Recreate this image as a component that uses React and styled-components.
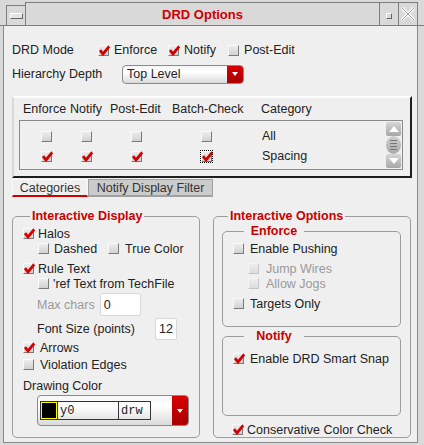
import React from "react";
import styled, { createGlobalStyle } from "styled-components";

const GlobalStyle = createGlobalStyle`
  html, body {
    margin: 0;
    padding: 0;
    background: #d9d9d9;
  }
  body {
    font-family: "Liberation Sans", Arial, sans-serif;
    font-size: 12.5px;
    color: #222;
  }
`;

const Window = styled.div`
  width: 424px;
  height: 445px;
  background: #d9d9d9;
  display: flex;
  flex-direction: column;
  overflow: hidden;
  box-sizing: border-box;
`;

const TitleBar = styled.div`
  height: 26px;
  display: flex;
  box-sizing: border-box;
  border-bottom: 1px solid #7c7c7c;
  padding: 0 6px 0 6px;
`;

const TitleButton = styled.div`
  width: ${(p) => p.$w}px;
  border-left: 1px solid #7c7c7c;
  border-right: ${(p) => (p.$last ? "1px solid #7c7c7c" : "none")};
  border-top: 1px solid #7c7c7c;
  margin-top: ${(p) => (p.$low ? 5 : 2)}px;
  display: flex;
  align-items: center;
  justify-content: center;
  box-sizing: border-box;
`;

const Title = styled.div`
  flex: 1;
  border-left: 1px solid #7c7c7c;
  border-top: 1px solid #7c7c7c;
  margin-top: 2px;
  display: flex;
  align-items: center;
  justify-content: center;
  font-weight: bold;
  font-size: 13px;
  color: #cc0000;
`;

const MinGlyph = styled.div`
  width: 11px;
  height: 4px;
  border: 1px solid #666;
  border-top-color: #fff;
  border-left-color: #fff;
  background: #e4e4e4;
`;

const SquareGlyph = styled.div`
  width: 4px;
  height: 4px;
  border: 1px solid #666;
  border-top-color: #fff;
  border-left-color: #fff;
  margin-top: 4px;
`;

const Content = styled.div`
  flex: 1;
  margin: 0 6px 2px 3px;
  background: #efefef;
  border-left: 1px solid #8a8a8a;
  border-right: 1px solid #8a8a8a;
  border-bottom: 1px solid #8a8a8a;
  padding: 12px 5px 0 8px;
  display: flex;
  flex-direction: column;
`;

const FormRow = styled.div`
  display: flex;
  align-items: center;
  height: 24px;
`;

const RowLabel = styled.div`
  width: ${(p) => p.$w}px;
  flex-shrink: 0;
`;

const Check = styled.label`
  display: flex;
  align-items: center;
  gap: ${(p) => p.$gap ?? 5}px;
  margin-right: ${(p) => p.$mr ?? 0}px;
  color: ${(p) => (p.$disabled ? "#9a9a9a" : "#222")};
  white-space: nowrap;
`;

const Box = styled.span`
  position: relative;
  width: 11px;
  height: 11px;
  box-sizing: border-box;
  flex-shrink: 0;
  border: 1px solid;
  border-color: ${(p) =>
    p.$disabled ? "#f4f4f4 #c4c4c4 #c4c4c4 #f4f4f4" : "#fafafa #7a7a7a #7a7a7a #fafafa"};
  background: ${(p) =>
    p.$disabled
      ? "linear-gradient(#ececec, #dedede)"
      : "linear-gradient(#ececec, #d2d2d2)"};
  outline: ${(p) => (p.$focus ? "1px dotted #000" : "none")};
  outline-offset: 0;
  svg {
    position: absolute;
    left: -1px;
    top: -2px;
  }
`;

const CheckMark = () => (
  <svg width="13" height="13" viewBox="0 0 13 13">
    <path d="M2 6.2 L5 10 L11.2 2.4" fill="none" stroke="#d40000" strokeWidth="2.8" strokeLinejoin="miter" />
  </svg>
);

const CheckBox = ({ checked, disabled, focus }) => (
  <Box $disabled={disabled} $focus={focus}>
    {checked && <CheckMark />}
  </Box>
);

const Combo = styled.div`
  width: ${(p) => p.$w}px;
  height: ${(p) => p.$h}px;
  box-sizing: border-box;
  border: 1px solid #8a8a8a;
  border-radius: 4px;
  background: linear-gradient(#f6f6f6, #ffffff 35%, #dadada);
  display: flex;
  align-items: stretch;
  overflow: hidden;
`;

const ComboText = styled.div`
  flex: 1;
  display: flex;
  align-items: center;
  padding-left: 4px;
`;

const ComboArrow = styled.div`
  width: 16px;
  background: linear-gradient(#d80000, #a80000);
  display: flex;
  align-items: center;
  justify-content: center;
  &::after {
    content: "";
    border-left: 3px solid transparent;
    border-right: 3px solid transparent;
    border-top: 4px solid #fff;
  }
`;

const TablePanel = styled.div`
  margin-top: 10px;
  height: 82px;
  box-sizing: border-box;
  border: 2px solid;
  border-color: #fdfdfd #1e1e1e #1e1e1e #d8d8d8;
  display: flex;
  flex-direction: column;
`;

const HeaderRow = styled.div`
  height: 22px;
  display: grid;
  grid-template-columns: 47px 40px 62px 89px auto;
  align-items: center;
  padding-left: 9px;
`;

const ListBox = styled.div`
  margin: 0 7px 6px 5px;
  flex: 1;
  border: 1px solid #8a8a8a;
  display: flex;
`;

const ListRows = styled.div`
  flex: 1;
  padding: 5px 0 0 7px;
`;

const ListRow = styled.div`
  height: 20px;
  display: grid;
  grid-template-columns: 39px 41px 59px 81px auto;
  align-items: center;
  justify-items: center;
`;

const CategoryName = styled.div`
  justify-self: start;
  padding-left: 15px;
`;

const ScrollBar = styled.div`
  width: 15px;
  padding: 1px 1px 1px 0;
  display: flex;
  flex-direction: column;
`;

const ScrollButton = styled.div`
  height: 14px;
  background: linear-gradient(#d6d6d6, #a6a6a6);
  border-radius: 2px;
  display: flex;
  align-items: center;
  justify-content: center;
  &::after {
    content: "";
    border-left: 5px solid transparent;
    border-right: 5px solid transparent;
    ${(p) => (p.$up ? "border-bottom: 6px solid #fff;" : "border-top: 6px solid #fff;")}
  }
`;

const ScrollTrack = styled.div`
  flex: 1;
  display: flex;
  align-items: center;
  justify-content: center;
`;

const Thumb = styled.div`
  width: 15px;
  height: 18px;
  border-radius: 50%;
  background: linear-gradient(#d0d0d0, #a9a9a9);
  display: flex;
  flex-direction: column;
  align-items: center;
  justify-content: center;
  gap: 2px;
  span {
    width: 7px;
    height: 1px;
    background: #777;
  }
`;

const Tabs = styled.div`
  display: flex;
  margin-top: 1px;
  height: 18px;
`;

const Tab = styled.div`
  width: ${(p) => p.$w}px;
  box-sizing: border-box;
  display: flex;
  align-items: center;
  justify-content: center;
  background: ${(p) => (p.$active ? "#efefef" : "#cbcbcb")};
  border: 1px solid ${(p) => (p.$active ? "#f8f8f8" : "#a0a0a0")};
  border-bottom: 2px solid ${(p) => (p.$active ? "#d00000" : "#a0a0a0")};
  color: #333;
`;

const Groups = styled.div`
  display: grid;
  grid-template-columns: 188px 198px;
  column-gap: 13px;
  margin-top: 12px;
`;

const Group = styled.fieldset`
  margin: 0;
  padding: ${(p) => p.$pad ?? "0 10px 10px"};
  border: 1px solid #9c9c9c;
  border-radius: 5px;
  min-width: 0;
  height: ${(p) => (p.$h ? `${p.$h}px` : "auto")};
  margin-top: ${(p) => p.$mt ?? 0}px;
  box-sizing: border-box;
  display: flex;
  flex-direction: column;
`;

const Legend = styled.legend`
  padding: 0 2px;
  margin-left: ${(p) => p.$ml ?? 7}px;
  text-align: left;
  line-height: 15px;
  font-weight: bold;
  color: #c80000;
`;

const LegendText = styled.span`
  display: block;
  width: ${(p) => (p.$w ? `${p.$w}px` : "auto")};
  text-align: center;
`;

const Line = styled.div`
  display: flex;
  align-items: center;
  height: ${(p) => p.$h ?? 15}px;
  margin-top: ${(p) => p.$mt ?? 0}px;
  padding-left: ${(p) => p.$indent ?? 0}px;
`;

const FieldLabel = styled.span`
  color: ${(p) => (p.$muted ? "#9a9a9a" : "#222")};
`;

const Field = styled.div`
  width: ${(p) => p.$w}px;
  height: ${(p) => p.$h}px;
  margin-left: ${(p) => p.$ml}px;
  box-sizing: border-box;
  background: #fff;
  border: 1px solid #d8d8d8;
  border-radius: 2px;
  display: flex;
  align-items: center;
  padding-left: 3px;
`;

const ColorCells = styled.div`
  margin: 5px 0 5px 2px;
  display: flex;
  border: 1px solid #333;
  width: 111px;
  box-sizing: border-box;
  font-family: "Liberation Mono", "Courier New", monospace;
  font-size: 12px;
`;

const Swatch = styled.div`
  width: 16px;
  background: #000;
  border: 1px solid #ffff00;
  box-sizing: border-box;
`;

const Cell = styled.div`
  width: ${(p) => p.$w}px;
  border-left: ${(p) => (p.$sep ? "1px solid #333" : "none")};
  display: flex;
  align-items: center;
  padding-left: 2px;
  box-sizing: border-box;
`;

const Item = ({ checked, disabled, focus, children, gap, mr }) => (
  <Check $disabled={disabled} $gap={gap} $mr={mr}>
    <CheckBox checked={checked} disabled={disabled} focus={focus} />
    {children}
  </Check>
);

const categories = [
  { name: "All", flags: [false, false, false, false] },
  { name: "Spacing", flags: [true, true, true, true] },
];

export default function App() {
  return (
    <>
      <GlobalStyle />
      <Window>
        <TitleBar>
          <TitleButton $w={19} $low>
            <MinGlyph />
          </TitleButton>
          <Title>DRD Options</Title>
          <TitleButton $w={19}>
            <SquareGlyph />
          </TitleButton>
          <TitleButton $w={20} $last>
            <svg width="16" height="16" viewBox="0 0 16 16">
              <path d="M2 2 L14 14 M14 2 L2 14" stroke="#fff" strokeWidth="3" />
              <path d="M2 2 L14 14 M14 2 L2 14" stroke="#9a9a9a" strokeWidth="1" />
            </svg>
          </TitleButton>
        </TitleBar>
        <Content>
          <FormRow>
            <RowLabel $w={86}>DRD Mode</RowLabel>
            <Item checked mr={11}>Enforce</Item>
            <Item checked mr={12}>Notify</Item>
            <Item>Post-Edit</Item>
          </FormRow>
          <FormRow>
            <RowLabel $w={110}>Hierarchy Depth</RowLabel>
            <Combo $w={122} $h={19}>
              <ComboText>Top Level</ComboText>
              <ComboArrow />
            </Combo>
          </FormRow>

          <TablePanel>
            <HeaderRow>
              <span>Enforce</span>
              <span>Notify</span>
              <span>Post-Edit</span>
              <span>Batch-Check</span>
              <span>Category</span>
            </HeaderRow>
            <ListBox>
              <ListRows>
                {categories.map((c) => (
                  <ListRow key={c.name}>
                    {c.flags.map((f, i) => (
                      <CheckBox key={i} checked={f} focus={c.name === "Spacing" && i === 3} />
                    ))}
                    <CategoryName>{c.name}</CategoryName>
                  </ListRow>
                ))}
              </ListRows>
              <ScrollBar>
                <ScrollButton $up />
                <ScrollTrack>
                  <Thumb>
                    <span />
                    <span />
                    <span />
                    <span />
                  </Thumb>
                </ScrollTrack>
                <ScrollButton />
              </ScrollBar>
            </ListBox>
          </TablePanel>

          <Tabs>
            <Tab $w={76} $active>Categories</Tab>
            <Tab $w={125}>Notify Display Filter</Tab>
          </Tabs>

          <Groups>
            <Group>
              <Legend>Interactive Display</Legend>
              <Line $mt={2}>
                <Item checked gap={4}>Halos</Item>
              </Line>
              <Line $indent={15}>
                <Item mr={11}>Dashed</Item>
                <Item gap={6}>True Color</Item>
              </Line>
              <Line $mt={5}>
                <Item checked gap={4}>Rule Text</Item>
              </Line>
              <Line $indent={15}>
                <Item gap={4}>'ref Text from TechFile</Item>
              </Line>
              <Line $indent={14} $h={23} $mt={2}>
                <FieldLabel $muted>Max chars</FieldLabel>
                <Field $w={41} $h={23} $ml={5}>0</Field>
              </Line>
              <Line $indent={14} $h={22} $mt={2}>
                <FieldLabel>Font Size (points)</FieldLabel>
                <Field $w={22} $h={22} $ml={20}>12</Field>
              </Line>
              <Line>
                <Item checked gap={6}>Arrows</Item>
              </Line>
              <Line $mt={2}>
                <Item gap={6}>Violation Edges</Item>
              </Line>
              <Line $mt={6} $h={16} $indent={-1}>
                <FieldLabel>Drawing Color</FieldLabel>
              </Line>
              <Line $mt={1} $h={31} $indent={14}>
                <Combo $w={159} $h={31}>
                  <ColorCells>
                    <Swatch />
                    <Cell $w={61} $sep>y0</Cell>
                    <Cell $w={32} $sep>drw</Cell>
                  </ColorCells>
                  <ComboText />
                  <ComboArrow />
                </Combo>
              </Line>
            </Group>

            <Group $pad="0 9px 0 8px">
              <Legend $ml={6}>Interactive Options</Legend>
              <Group $pad="0 10px 14px" $h={103}>
                <Legend $ml={11}>
                  <LegendText $w={56}>Enforce</LegendText>
                </Legend>
                <Line $mt={2}>
                  <Item gap={6}>Enable Pushing</Item>
                </Line>
                <Line $mt={5} $indent={15}>
                  <Item disabled gap={7}>Jump Wires</Item>
                </Line>
                <Line $indent={15}>
                  <Item disabled gap={7}>Allow Jogs</Item>
                </Line>
                <Line $mt={5}>
                  <Item gap={6}>Targets Only</Item>
                </Line>
              </Group>
              <Group $pad="0 10px" $h={87} $mt={2}>
                <Legend $ml={11}>
                  <LegendText $w={56}>Notify</LegendText>
                </Legend>
                <Line $mt={7}>
                  <Item checked gap={6}>Enable DRD Smart Snap</Item>
                </Line>
              </Group>
              <Line $mt={6} $indent={10}>
                <Item checked gap={4}>Conservative Color Check</Item>
              </Line>
            </Group>
          </Groups>
        </Content>
      </Window>
    </>
  );
}
